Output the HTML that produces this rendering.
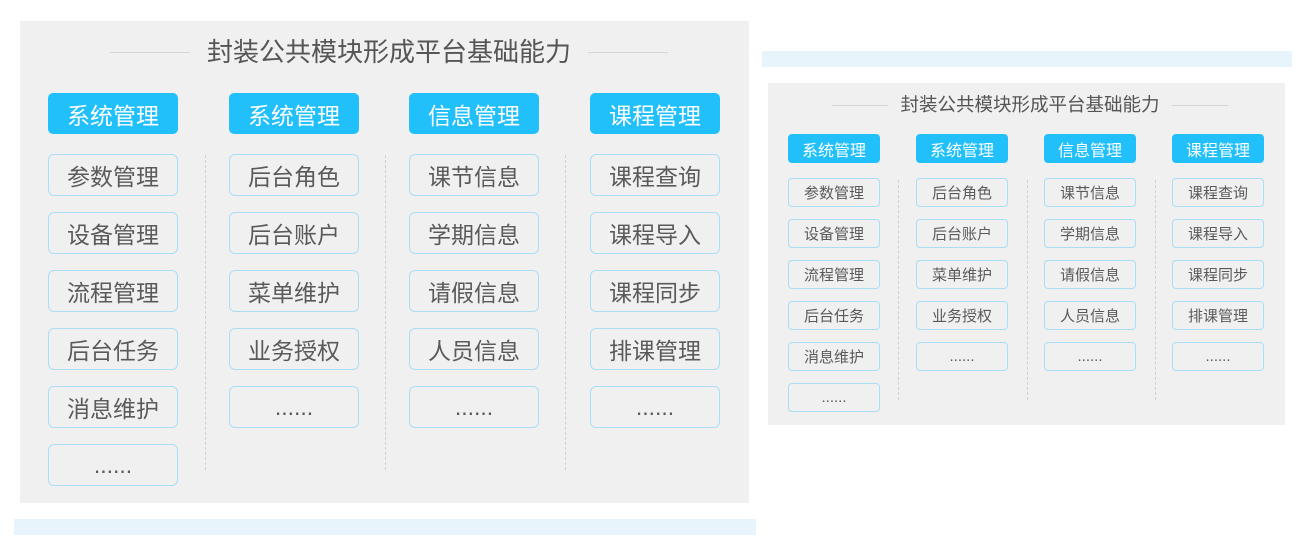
<!DOCTYPE html>
<html><head><meta charset="utf-8"><style>
*{margin:0;padding:0;box-sizing:border-box}
body{width:1313px;height:543px;background:#fff;position:relative;overflow:hidden;font-family:"Liberation Sans","Noto Sans CJK SC",sans-serif;color:#555}
.a{position:absolute}
.panel{background:#f0f0f0}
.bar{background:#e8f4fc}
.line{height:1px;background:#d6d6d6}
.col{position:absolute;display:flex;flex-direction:column}
.L .h{height:41px;border-radius:5px;background:#22c0fb;color:#fff;font-size:23px;display:flex;align-items:center;justify-content:center;margin-bottom:20px}
.L .i{height:42px;border-radius:6px;border:1px solid #a9def5;font-size:23px;display:flex;align-items:center;justify-content:center;margin-bottom:16px;color:#5a5a5a}
.L .col{width:130px;top:93px}
.R .h{height:29px;border-radius:4px;background:#22c0fb;color:#fff;font-size:16px;display:flex;align-items:center;justify-content:center;margin-bottom:15px}
.R .i{height:29px;border-radius:4px;border:1px solid #a9def5;font-size:15px;display:flex;align-items:center;justify-content:center;margin-bottom:12px;color:#5a5a5a}
.R .col{width:92px;top:134px}
.dl{position:absolute;width:0;border-left:1px dashed #d0d0d0}
</style></head><body>
<div class="a panel" style="left:20px;top:21px;width:729px;height:482px"></div>
<div class="a bar" style="left:14px;top:519px;width:742px;height:16px"></div>
<div class="a line" style="left:110px;top:52px;width:80px"></div>
<div class="a line" style="left:588px;top:52px;width:80px"></div>
<div class="a" style="left:190px;top:35px;width:398px;text-align:center;font-size:26px;color:#555;line-height:34px">封装公共模块形成平台基础能力</div>
<div class="dl" style="left:205px;top:155px;height:315px"></div>
<div class="dl" style="left:385px;top:155px;height:315px"></div>
<div class="dl" style="left:565px;top:155px;height:315px"></div>
<div class="L">
<div class="col" style="left:48px"><div class="h">系统管理</div><div class="i">参数管理</div><div class="i">设备管理</div><div class="i">流程管理</div><div class="i">后台任务</div><div class="i">消息维护</div><div class="i">......</div></div>
<div class="col" style="left:229px"><div class="h">系统管理</div><div class="i">后台角色</div><div class="i">后台账户</div><div class="i">菜单维护</div><div class="i">业务授权</div><div class="i">......</div></div>
<div class="col" style="left:409px"><div class="h">信息管理</div><div class="i">课节信息</div><div class="i">学期信息</div><div class="i">请假信息</div><div class="i">人员信息</div><div class="i">......</div></div>
<div class="col" style="left:590px"><div class="h">课程管理</div><div class="i">课程查询</div><div class="i">课程导入</div><div class="i">课程同步</div><div class="i">排课管理</div><div class="i">......</div></div>
</div>

<div class="a bar" style="left:762px;top:51px;width:530px;height:16px"></div>
<div class="a panel" style="left:768px;top:83px;width:517px;height:342px"></div>
<div class="a line" style="left:832px;top:105px;width:56px"></div>
<div class="a line" style="left:1172px;top:105px;width:56px"></div>
<div class="a" style="left:888px;top:92px;width:284px;text-align:center;font-size:18.5px;color:#555;line-height:26px">封装公共模块形成平台基础能力</div>
<div class="dl" style="left:898px;top:180px;height:220px"></div>
<div class="dl" style="left:1027px;top:180px;height:220px"></div>
<div class="dl" style="left:1155px;top:180px;height:220px"></div>
<div class="R">
<div class="col" style="left:788px"><div class="h">系统管理</div><div class="i">参数管理</div><div class="i">设备管理</div><div class="i">流程管理</div><div class="i">后台任务</div><div class="i">消息维护</div><div class="i">......</div></div>
<div class="col" style="left:916px"><div class="h">系统管理</div><div class="i">后台角色</div><div class="i">后台账户</div><div class="i">菜单维护</div><div class="i">业务授权</div><div class="i">......</div></div>
<div class="col" style="left:1044px"><div class="h">信息管理</div><div class="i">课节信息</div><div class="i">学期信息</div><div class="i">请假信息</div><div class="i">人员信息</div><div class="i">......</div></div>
<div class="col" style="left:1172px"><div class="h">课程管理</div><div class="i">课程查询</div><div class="i">课程导入</div><div class="i">课程同步</div><div class="i">排课管理</div><div class="i">......</div></div>
</div>
</body></html>
